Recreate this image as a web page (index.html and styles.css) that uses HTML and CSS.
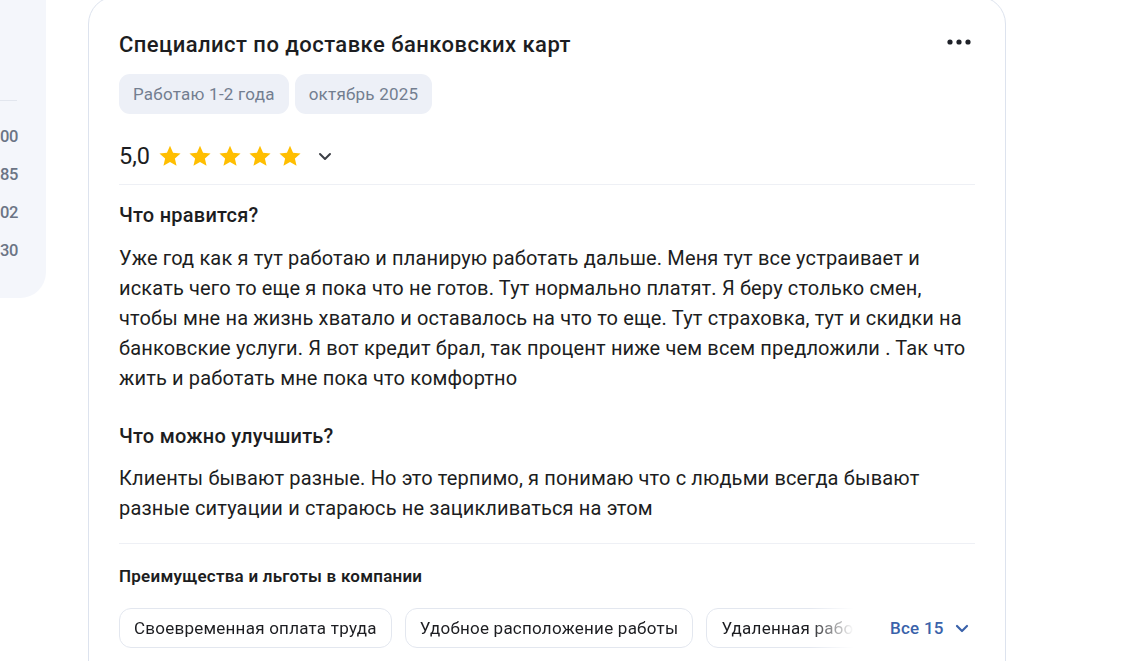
FILE: index.html
```html
<!DOCTYPE html>
<html lang="ru">
<head>
<meta charset="utf-8">
<link rel="stylesheet" href="styles.css">
</head>
<body>
<div class="page">
  <aside class="side">
    <div class="side-inner">
      <div class="side-divider"></div>
      <ul class="side-list">
        <li>00</li>
        <li>85</li>
        <li>02</li>
        <li>30</li>
      </ul>
    </div>
  </aside>
  <article class="card">
    <header class="card-head">
      <h1 class="title">Специалист по доставке банковских карт</h1>
      <button class="more" aria-label="Ещё">
        <svg width="24" height="6" viewBox="0 0 24 6"><circle cx="3" cy="3" r="2.6" fill="#1f2229"/><circle cx="12" cy="3" r="2.6" fill="#1f2229"/><circle cx="21" cy="3" r="2.6" fill="#1f2229"/></svg>
      </button>
    </header>
    <div class="tags">
      <span class="tag">Работаю 1-2 года</span>
      <span class="tag">октябрь 2025</span>
    </div>
    <div class="rating">
      <span class="score">5,0</span>
      <span class="stars">
        <svg class="star" viewBox="0 0 24 24"><path d="M12 1.8l3.05 6.9 7.5.7-5.67 5 1.66 7.35L12 17.9l-6.54 3.85 1.66-7.35-5.67-5 7.5-.7z" fill="#ffbe00"/></svg>
        <svg class="star" viewBox="0 0 24 24"><path d="M12 1.8l3.05 6.9 7.5.7-5.67 5 1.66 7.35L12 17.9l-6.54 3.85 1.66-7.35-5.67-5 7.5-.7z" fill="#ffbe00"/></svg>
        <svg class="star" viewBox="0 0 24 24"><path d="M12 1.8l3.05 6.9 7.5.7-5.67 5 1.66 7.35L12 17.9l-6.54 3.85 1.66-7.35-5.67-5 7.5-.7z" fill="#ffbe00"/></svg>
        <svg class="star" viewBox="0 0 24 24"><path d="M12 1.8l3.05 6.9 7.5.7-5.67 5 1.66 7.35L12 17.9l-6.54 3.85 1.66-7.35-5.67-5 7.5-.7z" fill="#ffbe00"/></svg>
        <svg class="star" viewBox="0 0 24 24"><path d="M12 1.8l3.05 6.9 7.5.7-5.67 5 1.66 7.35L12 17.9l-6.54 3.85 1.66-7.35-5.67-5 7.5-.7z" fill="#ffbe00"/></svg>
      </span>
      <svg class="chev" width="14" height="9" viewBox="0 0 14 9"><path d="M2 2l5 5 5-5" fill="none" stroke="#3c3f46" stroke-width="2" stroke-linecap="round" stroke-linejoin="round"/></svg>
    </div>
    <hr class="divider">
    <section class="block">
      <h2 class="block-title">Что нравится?</h2>
      <p class="block-text">Уже год как я тут работаю и планирую работать дальше. Меня тут все устраивает и искать чего то еще я пока что не готов. Тут нормально платят. Я беру столько смен, чтобы мне на жизнь хватало и оставалось на что то еще. Тут страховка, тут и скидки на банковские услуги. Я вот кредит брал, так процент ниже чем всем предложили . Так что жить и работать мне пока что комфортно</p>
    </section>
    <section class="block block-second">
      <h2 class="block-title">Что можно улучшить?</h2>
      <p class="block-text">Клиенты бывают разные. Но это терпимо, я понимаю что с людьми всегда бывают разные ситуации и стараюсь не зацикливаться на этом</p>
    </section>
    <hr class="divider divider-low">
    <section class="benefits">
      <h3 class="benefits-title">Преимущества и льготы в компании</h3>
      <div class="benefits-row">
        <div class="chips">
          <span class="chip">Своевременная оплата труда</span>
          <span class="chip">Удобное расположение работы</span>
          <span class="chip">Удаленная работа</span>
        </div>
        <button class="all">Все 15
          <svg width="14" height="9" viewBox="0 0 14 9"><path d="M2 2l5 5 5-5" fill="none" stroke="#3a62aa" stroke-width="2.2" stroke-linecap="round" stroke-linejoin="round"/></svg>
        </button>
      </div>
    </section>
  </article>
</div>
</body>
</html>
```

FILE: styles.css
```css
* { box-sizing: border-box; }
html, body { margin: 0; padding: 0; background: #fff; }
body {
  font-family: Roboto, "Noto Sans", "Liberation Sans", sans-serif;
  color: #1c1d21;
  overflow: hidden;
  height: 661px;
  letter-spacing: 0.015em;
}
.page {
  display: flex;
  align-items: flex-start;
  gap: 42px;
}
.side {
  width: 46px;
  height: 298px;
  flex: 0 0 46px;
  background: #f4f6fb;
  border-bottom-right-radius: 26px;
  overflow: hidden;
  padding-right: 29px;
}
.side-inner {
  width: 17px;
  padding-top: 100px;
}
.side-divider {
  height: 1px;
  background: #e2e6ee;
}
.side-list {
  list-style: none;
  margin: 0;
  padding: 25px 0 0;
  font-size: 16.5px;
  color: #6b7485;
  font-weight: 500;
  letter-spacing: -0.4px;
}
.side-list li {
  line-height: 22px;
  margin-bottom: 16px;
  white-space: nowrap;
}
.card {
  width: 918px;
  flex: 0 0 918px;
  margin-top: -4px;
  border: 1px solid #dde3ee;
  border-radius: 28px;
  padding: 34px 30px 30px;
  height: 720px;
}
.card-head {
  display: flex;
  justify-content: space-between;
  align-items: center;
}
.title {
  margin: 0;
  font-size: 22px;
  line-height: 28px;
  font-weight: 500;
  letter-spacing: 0.45px;
  color: #1c1d21;
}
.more {
  border: 0;
  background: none;
  padding: 0;
  margin-right: 4px;
  margin-top: -6px;
  display: flex;
}
.tags {
  display: flex;
  gap: 6px;
  margin-top: 15px;
}
.tag {
  height: 40px;
  padding: 0 14px;
  display: flex;
  align-items: center;
  background: #edf0f7;
  border-radius: 11px;
  font-size: 17px;
  color: #737e90;
}
.rating {
  display: flex;
  align-items: center;
  height: 32px;
  margin-top: 26px;
}
.score {
  font-size: 23.5px;
  font-weight: 400;
  letter-spacing: 0;
  color: #1c1d21;
  margin-right: 8px;
}
.stars {
  display: flex;
  gap: 6px;
}
.star {
  width: 24px;
  height: 24px;
}
.chev {
  margin-left: 16px;
}
.divider {
  border: 0;
  height: 1px;
  background: #eef0f5;
  margin: 12px 0 0;
}
.block { margin-top: 18px; }
.block-second { margin-top: 31px; }
.block-title {
  margin: 0;
  font-size: 20px;
  line-height: 24px;
  font-weight: 500;
  color: #1c1d21;
}
.block-text {
  margin: 16px 0 0;
  font-size: 20px;
  line-height: 30px;
  letter-spacing: 0.15px;
  color: #1c1d21;
}
.block-second .block-text { margin-top: 15px; }
.divider-low { margin-top: 20px; }
.benefits { margin-top: 21px; }
.benefits-title {
  margin: 0;
  font-size: 17px;
  line-height: 22px;
  font-weight: 600;
  color: #1c1d21;
}
.benefits-row {
  display: flex;
  align-items: center;
  margin-top: 21px;
}
.chips {
  display: flex;
  gap: 13px;
  width: 742px;
  overflow: hidden;
  -webkit-mask-image: linear-gradient(to right, #000 690px, transparent 735px);
  mask-image: linear-gradient(to right, #000 690px, transparent 735px);
}
.chip {
  flex: 0 0 auto;
  height: 40px;
  padding: 0 14px;
  display: flex;
  align-items: center;
  border: 1px solid #e3e7ef;
  border-radius: 12px;
  font-size: 17px;
  color: #1c1d21;
  white-space: nowrap;
}
.all {
  margin-left: 29px;
  border: 0;
  background: none;
  padding: 0;
  font-family: inherit;
  letter-spacing: inherit;
  font-size: 17px;
  font-weight: 500;
  color: #3a62aa;
  display: flex;
  align-items: center;
  gap: 11px;
}
```
